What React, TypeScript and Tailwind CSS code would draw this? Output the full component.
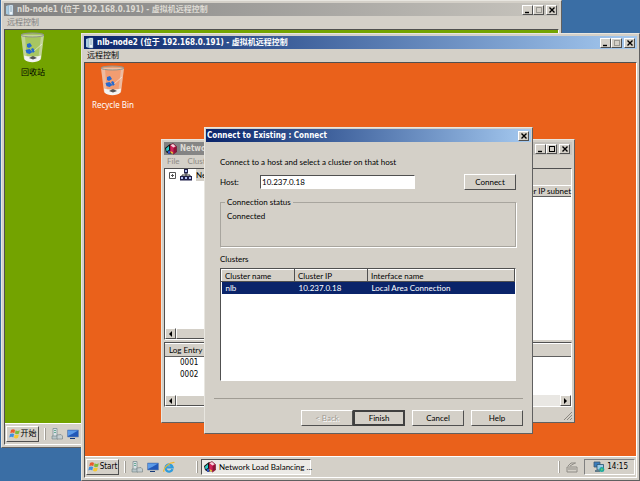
import type { ReactNode } from 'react';
import clsx from 'clsx';

const raised = 'border border-t-white border-l-white border-r-[#505050] border-b-[#505050] bg-[#d4d0c8]';
const sunken = 'border border-t-[#505050] border-l-[#505050] border-r-white border-b-white';

function CaptionButton({ kind, disabled }: { kind: 'min' | 'max' | 'close'; disabled?: boolean }) {
  return (
    <button aria-label={kind} disabled={disabled} className={clsx('flex h-[10px] w-[11px] items-center justify-center', raised)}>
      <svg viewBox="0 0 8 8" className="h-2 w-2" fill="none" stroke={disabled ? '#9a9892' : '#000'}>
        {kind === 'min' && <path d="M1 6.5h4" strokeWidth="1.4" />}
        {kind === 'max' && <path d="M1 1.5h6M1.5 1v6M6.5 1v6M1 6.5h6" strokeWidth="1" />}
        {kind === 'close' && <path d="M1.5 1.5l5 5M6.5 1.5l-5 5" strokeWidth="1.4" />}
      </svg>
    </button>
  );
}

function ServerIcon() {
  return (
    <svg viewBox="0 0 9 12" className="h-3 w-[9px] shrink-0">
      <path d="M1 2l3-1v10l-3-1z" fill="#a9cbe0" />
      <path d="M4 1h4v10H4z" fill="#eef6fb" stroke="#6e8fa8" strokeWidth=".5" />
      <path d="M5 3h2M5 5h2M5 7h2" stroke="#4f7896" strokeWidth=".7" />
    </svg>
  );
}

function BalanceIcon() {
  return (
    <svg viewBox="0 0 12 12" className="h-3 w-3 shrink-0">
      <path d="M0 5l5-4 2 2v7l-3 1-3-2z" fill="#111" />
      <path d="M1 5.500l3-2.500v4L1.500 8.500z" fill="#2cc8c4" />
      <path d="M5 2l3-1.500 3.500 3v5.500l-3 2-3.500-2z" fill="#d0245a" stroke="#400012" strokeWidth=".5" />
      <path d="M5.500 2.300l2.500-1.300 2.500 2.200-2 1.300z" fill="#f4d4dc" />
      <path d="M8.500 5l2.700-1.300v5L8.500 10.500z" fill="#8d1436" />
      <path d="M2.500 8.500l2.500-1v3l-1.500.5z" fill="#2f54cf" />
      <path d="M5.500 8l2.500 1.500v1.500l-2.500-1.500z" fill="#e7cf3a" />
    </svg>
  );
}

function BinIcon() {
  return (
    <svg viewBox="0 0 26 32" className="h-8 w-[26px]">
      <path d="M1 3l3 24c2 3 15 3 17 0l3-24z" fill="#fff" fillOpacity=".38" />
      <path d="M1 3l3 24 3 2L5 4zM24 3l-3 24-3 2 3-25z" fill="#e8e8e8" fillOpacity=".4" />
      <path d="M4 23.500c3 1.500 14 1.500 17 0l-.6 4c-3 3.500-13 3.500-15.800 0z" fill="#f4f4f2" />
      <path d="M9 26l4-2 4 2-4 1.500z" fill="#555" />
      <ellipse cx="12.500" cy="3" rx="11.500" ry="2" fill="#e6e8e3" fillOpacity=".45" stroke="#8f938d" strokeWidth="1" />
      <path d="M7 12l3-1 2 3-3 2-2-1zM5.500 18l4-1 3 3-3 2-3-1zM11 17l2-1 2 3-2 2z" fill="#2569cf" />
      <path d="M14 19l8-7" stroke="#fff" strokeOpacity=".5" />
    </svg>
  );
}

function Flag() {
  return (
    <svg viewBox="0 0 12 12" className="h-3 w-3 shrink-0">
      <path d="M2 2c1.500-1.300 3-1 4 0L5.300 5.300c-1.200-1-2.500-1-4 0z" fill="#ea5a2c" />
      <path d="M6.600 2.300c1.300 1 2.900.8 4.200 0l-.8 3.300c-1.500 1-2.900.8-4 0z" fill="#7fba3c" />
      <path d="M1.100 6.100c1.300-1 2.700-.9 4 0l-.8 3.300c-1.200-1-2.500-1-4 0z" fill="#3f8fe0" />
      <path d="M5.800 6.400c1.300 1 2.600.9 4.100 0L9 9.700c-1.400 1-2.800.8-4 0z" fill="#f6c832" />
    </svg>
  );
}

function ServerManagerIcon() {
  return (
    <svg viewBox="0 0 12 12" className="h-3 w-3">
      <path d="M2 .5h4v8H2z" fill="#d9e2e4" stroke="#7d8f94" strokeWidth=".8" />
      <path d="M3 2.500h2M3 4.500h2" stroke="#4d9c80" strokeWidth=".8" />
      <path d="M1 8h6v3H1z" fill="#b9c6c9" stroke="#6d8085" strokeWidth=".6" />
      <path d="M6 7l4-.5 1.500 1.500v3H6z" fill="#c5ced0" stroke="#6f7c80" strokeWidth=".6" />
    </svg>
  );
}

function DesktopIcon() {
  return (
    <svg viewBox="0 0 12 12" className="h-3 w-3">
      <path d="M.5 2h11v7H.5z" fill="#2258b8" stroke="#6d86ad" strokeWidth=".6" />
      <path d="M1 2.500h10L6 5.500 1 8z" fill="#5c9be8" />
      <path d="M3 10.500h5" stroke="#163a78" />
    </svg>
  );
}

function ExplorerIcon() {
  return (
    <svg viewBox="0 0 12 12" className="h-3 w-3" fill="none">
      <path d="M9.500 8.200A3.600 3.600 0 1 1 9.600 6.300H3" stroke="#2f9bdc" strokeWidth="2.200" />
      <path d="M1 10.800C-.5 8 6 1 11.500 1.500" stroke="#f0b92c" strokeWidth="1.200" />
    </svg>
  );
}

function NetworkIcon() {
  return (
    <svg viewBox="0 0 12 12" className="h-3 w-3">
      <path d="M1 1h6v5H1z" fill="#3a7cbc" stroke="#3c5870" strokeWidth=".8" />
      <path d="M4 3.500h6.500V9H4z" fill="#9ccbe8" stroke="#24506f" strokeWidth=".8" />
      <path d="M2 9h5v2H2z" fill="#617b8a" />
      <circle cx="8.800" cy="8.500" r="2.500" fill="#20a8a0" />
      <path d="M7.800 7.500l2 .5-1 2z" fill="#7bd35e" />
    </svg>
  );
}

function ClusterIcon() {
  return (
    <svg viewBox="0 0 12 12" className="h-3 w-3 shrink-0">
      <path d="M6 4v4M2 8V6h8v2" stroke="#333" fill="none" />
      {[[4, 0], [0, 7], [4, 7], [8, 7]].map(([x, y]) => (
        <g key={`${x}-${y}`}>
          <rect x={x} y={y} width="4" height="4.500" fill="#20204a" />
          <rect x={x + 1} y={y + 1} width="2" height="2" fill="#b4c2f4" />
        </g>
      ))}
    </svg>
  );
}

type Tone = 'active' | 'inactive';

function TitleBar({ title, icon, tone, buttons }: { title: string; icon?: ReactNode; tone: Tone; buttons: ReactNode }) {
  return (
    <header
      className={clsx(
        'flex h-[13px] shrink-0 items-center gap-[3px] bg-linear-to-r pr-[2px] pl-px',
        tone === 'active' ? 'from-[#0a246a] to-[#a6caf0] text-white' : 'from-[#808080] to-[#c8c5be] text-[#dedbd4]',
      )}
    >
      {icon}
      <h1 className="min-w-0 flex-1 overflow-hidden font-['DejaVu_Sans_Condensed','Noto_Sans_CJK_SC',sans-serif] text-[8px] leading-[13px] font-bold whitespace-nowrap">
        {title}
      </h1>
      <div className="flex">{buttons}</div>
    </header>
  );
}

function Captions({ maxDisabled }: { maxDisabled?: boolean }) {
  return (
    <>
      <CaptionButton kind="min" />
      <CaptionButton kind="max" disabled={maxDisabled} />
      <span className="w-[2px]" />
      <CaptionButton kind="close" />
    </>
  );
}

const frame = 'flex flex-col border border-t-[#e8e6e0] border-l-[#e8e6e0] border-r-[#606060] border-b-[#606060] bg-[#d4d0c8]';

function RemoteWindow(props: { title: string; tone: Tone; className: string; desktop: string; taskbar: ReactNode; children: ReactNode }) {
  return (
    <section className={clsx('absolute p-[2px]', frame, props.className)}>
      <TitleBar title={props.title} tone={props.tone} icon={<ServerIcon />} buttons={<Captions maxDisabled />} />
      <nav className="h-[13px] shrink-0 px-[3px]">
        <button className={clsx('block text-[8px] leading-[13px]', props.tone === 'inactive' && 'text-[#808080]')}>远程控制</button>
      </nav>
      <div className={clsx('flex min-h-0 flex-1 flex-col', sunken)}>
        <main className={clsx('relative min-h-0 flex-1', props.desktop)}>{props.children}</main>
        <footer className="flex h-[21px] shrink-0 items-center border-t border-white bg-[#d4d0c8] px-px">{props.taskbar}</footer>
      </div>
    </section>
  );
}

function StartButton({ label }: { label: string }) {
  return (
    <button className={clsx("flex h-4 w-[33px] shrink-0 items-center justify-center font-['DejaVu_Sans_Condensed','Noto_Sans_CJK_SC',sans-serif] text-[8px] leading-3 whitespace-nowrap", raised)}>
      <Flag />
      {label}
    </button>
  );
}

function Grip() {
  return <span className="h-3 w-[2px] shrink-0 border-l border-white bg-[#a09c94]" />;
}

function ScrollEnd({ dir }: { dir: 'left' | 'right' }) {
  return (
    <button aria-label={`Scroll ${dir}`} className={clsx('flex h-[11px] w-[11px] shrink-0 items-center justify-center', raised)}>
      <svg viewBox="0 0 5 6" className="h-[6px] w-[5px]">
        <path d={dir === 'left' ? 'M4 0v6L1 3z' : 'M1 0v6l3-3z'} />
      </svg>
    </button>
  );
}

function ScrollBar() {
  return (
    <div className="mt-auto flex h-[11px] justify-between bg-[#e9e7e3]">
      <ScrollEnd dir="left" />
      <div className="min-w-0 flex-1">
        <span className={clsx('block h-full max-w-[60px]', raised)} />
      </div>
      <ScrollEnd dir="right" />
    </div>
  );
}

function ManagerWindow() {
  return (
    <section className={clsx('absolute top-[76px] left-[76px] h-[284px] w-[414px] p-[2px]', frame)}>
      <TitleBar title="Network" tone="inactive" icon={<BalanceIcon />} buttons={<Captions />} />
      <nav className="flex h-[13px] shrink-0 gap-2 px-[3px] text-[8px] leading-[13px] text-[#8c8a84]">
        <button>File</button>
        <button>Cluster</button>
      </nav>
      <div className="flex h-[172px] shrink-0 gap-[2px]">
        <div className={clsx('flex w-[120px] flex-col bg-white', sunken)}>
          <div className="flex h-3 items-center gap-1 pl-1 text-[8px]">
            <svg viewBox="0 0 7 7" className="h-[7px] w-[7px]" fill="none" stroke="#555">
              <path d="M.5.5h6v6h-6zM2 3.500h3M3.500 2v3" />
            </svg>
            <ClusterIcon />
            <span className="w-5 overflow-hidden bg-[#d4d0c8] leading-3">Net</span>
          </div>
          <ScrollBar />
        </div>
        <div className={clsx('flex min-w-0 flex-1 flex-col bg-white', sunken)}>
          <div className="h-4 bg-[#d4d0c8]" />
          <div className="h-[12px] border-t border-b border-t-white border-b-[#606060] bg-[#d4d0c8] text-right text-[8px] leading-[10px] whitespace-nowrap">Cluster IP subnet</div>
        </div>
      </div>
      <div className={clsx('mt-[2px] flex h-[65px] shrink-0 flex-col bg-white', sunken)}>
        <table className="w-full text-left text-[8px] leading-3">
          <thead>
            <tr className="h-3 border-t border-b border-t-white border-b-[#606060] bg-[#d4d0c8]">
              <th className="px-1 font-normal">Log Entry</th>
            </tr>
          </thead>
          <tbody className="font-['DejaVu_Sans_Condensed',sans-serif]">
            <tr><td className="pl-[15px]">0001</td></tr>
            <tr><td className="pl-[15px]">0002</td></tr>
          </tbody>
        </table>
        <ScrollBar />
      </div>
      <div className="flex min-h-0 flex-1 items-end justify-end">
        <svg viewBox="0 0 9 9" className="h-[9px] w-[9px]" stroke="#8a8780">
          <path d="M1 9l8-8M4 9l5-5M7 9l2-2" />
        </svg>
      </div>
    </section>
  );
}

function DialogButton({ children, disabled, primary }: { children: ReactNode; disabled?: boolean; primary?: boolean }) {
  return (
    <button
      disabled={disabled}
      className={clsx(
        'h-4 w-[52px] shrink-0 text-[8px] leading-3',
        primary ? 'border-2 border-[#404040] bg-[#d4d0c8]' : raised,
        disabled && 'text-[#a09c94] [text-shadow:1px_1px_0_white]',
      )}
    >
      {children}
    </button>
  );
}

const columnHeader = 'border border-t-white border-l-white border-r-[#505050] border-b-[#505050] px-[3px] font-normal';

function ConnectDialog() {
  return (
    <section role="dialog" className={clsx('absolute top-[64px] left-[119px] h-[307px] w-[329px] p-[1px]', frame)}>
      <TitleBar title="Connect to Existing :  Connect" tone="active" buttons={<CaptionButton kind="close" />} />
      <div className="flex min-h-0 flex-1 flex-col pt-[14px] pr-[15px] pl-[14px] text-[8px] leading-3">
        <p>Connect to a host and select a cluster on that host</p>
        <div className="mt-[6px] flex h-4 items-center">
          <label htmlFor="host" className="w-10">Host:</label>
          <input id="host" defaultValue="10.237.0.18" className={clsx('h-[14px] w-[155px] bg-white px-px text-[8px] leading-3 outline-none', sunken)} />
          <span className="flex-1" />
          <DialogButton>Connect</DialogButton>
        </div>
        <fieldset className="mt-[6px] h-[51px] border border-[#a8a59e] px-1 shadow-[1px_1px_0_white]">
          <legend className="px-[2px]">Connection status</legend>
          <p className="mt-[2px] px-[2px]">Connected</p>
        </fieldset>
        <p className="mt-[6px]">Clusters</p>
        <div className={clsx('mt-[3px] h-[113px] bg-white', sunken)}>
          <table className="w-full table-fixed text-left">
            <thead>
              <tr className="h-3 bg-[#d4d0c8] leading-[10px]">
                <th className={clsx('w-[73px]', columnHeader)}>Cluster name</th>
                <th className={clsx('w-[73px]', columnHeader)}>Cluster IP</th>
                <th className={columnHeader}>Interface name</th>
              </tr>
            </thead>
            <tbody>
              <tr className="h-3 bg-[#0a246a] text-white">
                <td className="px-1">nlb</td>
                <td className="px-1">10.237.0.18</td>
                <td className="px-1">Local Area Connection</td>
              </tr>
            </tbody>
          </table>
        </div>
      </div>
      <div className="mx-2 mb-[6px] flex h-7 shrink-0 items-end justify-end border-t border-[#a09c94]">
        <DialogButton disabled>&lt; Back</DialogButton>
        <DialogButton primary>Finish</DialogButton>
        <span className="w-[7px]" />
        <DialogButton>Cancel</DialogButton>
        <span className="w-[7px]" />
        <DialogButton>Help</DialogButton>
      </div>
    </section>
  );
}

export default function App() {
  return (
    <div className="relative h-screen w-full overflow-hidden bg-[#3a6ea5] font-['Lato','Noto_Sans_CJK_SC',sans-serif] text-black">
      <RemoteWindow
        title="nlb-node1 (位于 192.168.0.191) - 虚拟机远程控制"
        tone="inactive"
        className="top-0 left-px h-[448px] w-[561px]"
        desktop="bg-[#73a300]"
        taskbar={
          <>
            <StartButton label="开始" />
            <span className="w-[5px]" />
            <Grip />
            <span className="flex gap-1 pl-[5px]"><ServerManagerIcon /><DesktopIcon /></span>
          </>
        }
      >
        <div className="flex w-14 flex-col items-center pt-[2px] text-[8px] leading-4">
          <BinIcon />
          回收站
        </div>
      </RemoteWindow>
      <RemoteWindow
        title="nlb-node2 (位于 192.168.0.191) - 虚拟机远程控制"
        tone="active"
        className="top-[33px] right-0 left-[81px] h-[448px]"
        desktop="bg-[#ea611b]"
        taskbar={
          <>
            <StartButton label="Start" />
            <span className="w-[5px]" />
            <Grip />
            <span className="flex gap-1 pl-[5px]"><ServerManagerIcon /><DesktopIcon /><ExplorerIcon /></span>
            <span className="w-[21px]" />
            <Grip />
            <button className={clsx('ml-[3px] flex h-4 w-[110px] items-center gap-[3px] bg-[#eceae6] px-[2px] text-[8px] whitespace-nowrap', sunken)}>
              <BalanceIcon />
              Network Load Balancing ...
            </button>
            <span className="flex-1" />
            <Grip />
            <svg viewBox="0 0 12 12" className="mx-[6px] h-3 w-3" fill="none" stroke="#8f8c86">
              <path d="M1 6h10v5H1zM2 5l3-3 5 0M4 5l5-3M2 8h8" />
            </svg>
            <div className="flex h-4 w-[51px] items-center justify-between border border-t-[#808080] border-r-white border-b-white border-l-[#808080] pr-[6px] pl-2 font-['DejaVu_Sans_Condensed',sans-serif] text-[8px]">
              <NetworkIcon />
              14:15
            </div>
          </>
        }
      >
        <div className="flex w-14 flex-col items-center pt-[2px] font-['Noto_Sans',sans-serif] text-[8px] leading-4 whitespace-nowrap text-white">
          <BinIcon />
          Recycle Bin
        </div>
        <ManagerWindow />
        <ConnectDialog />
      </RemoteWindow>
    </div>
  );
}
